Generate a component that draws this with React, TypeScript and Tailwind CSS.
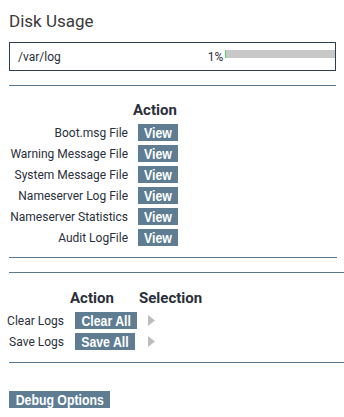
import { useState } from 'react';

const files = [
  'Boot.msg File',
  'Warning Message File',
  'System Message File',
  'Nameserver Log File',
  'Nameserver Statistics',
  'Audit LogFile',
];

function Btn({ children, w }: { children: React.ReactNode; w: string }) {
  return (
    <button
      className={`flex h-[17px] items-center justify-center bg-[#5e7d93] text-[15px] leading-[17px] font-bold text-white font-['Liberation_Sans',Arial,sans-serif] ${w}`}
    >
      <span className="inline-block whitespace-nowrap scale-x-[0.82]">{children}</span>
    </button>
  );
}

function Arrow() {
  return (
    <svg width="7" height="11" viewBox="0 0 7 11" className="block">
      <path d="M0 0 L7 5.5 L0 11 Z" fill="#bdbdbd" />
    </svg>
  );
}

export default function App() {
  const [usage] = useState(1);

  return (
    <div className="w-[344px] h-[417px] bg-white text-[#2a2f3a] font-['Roboto',sans-serif] overflow-hidden">
      <div className="pl-[9px] pt-[11px] text-[17px] leading-[20px] text-[#3a3a3a]">Disk Usage</div>

      <div className="mx-[9px] mt-[11px] h-[29px] w-[327px] border border-[#2c3e50] flex items-center pl-[8px]">
        <span className="text-[12px] leading-[16px] w-[186px]">/var/log</span>
        <span className="text-[12px] leading-[16px] w-[20px] text-right">{usage}%</span>
        <div className="ml-[2px] h-[8px] w-[110px] bg-[#c8c8c8] mt-[-6px]">
          <div className="h-full bg-[#4cd964]" style={{ width: `${Math.max(1, usage)}px` }} />
        </div>
      </div>

      <hr className="mx-[9px] mt-[14px] w-[327px] border-t border-[#5a7890]" />

      <div className="pl-[133px] mt-[15px] text-[15px] leading-[19px] font-bold">Action</div>
      <div className="mt-[4px] flex flex-col gap-[4px]">
        {files.map((f) => (
          <div key={f} className="flex items-center h-[17px]">
            <span className="w-[128px] text-right text-[12px] leading-[16px] whitespace-nowrap">{f}</span>
            <div className="ml-[10px]">
              <Btn w="w-[40px]">View</Btn>
            </div>
          </div>
        ))}
      </div>

      <hr className="mx-[9px] mt-[11px] w-[328px] border-t border-[#5a7890]" />
      <hr className="ml-[9px] mt-[14px] w-[335px] border-t border-[#5a7890]" />

      <div className="flex mt-[16px] text-[15px] leading-[19px] font-bold">
        <span className="pl-[70px] w-[139px]">Action</span>
        <span>Selection</span>
      </div>
      <div className="mt-[4px] flex flex-col gap-[4px]">
        {[
          ['Clear Logs', 'Clear All', 'w-[62px]'],
          ['Save Logs', 'Save All', 'w-[60px]'],
        ].map(([l, b, w]) => (
          <div key={l} className="flex items-center h-[17px]">
            <span className="w-[64px] text-right text-[12px] leading-[16px] whitespace-nowrap">{l}</span>
            <div className="w-[84px] pl-[11px]">
              <Btn w={w}>{b}</Btn>
            </div>
            <Arrow />
          </div>
        ))}
      </div>

      <hr className="ml-[9px] mt-[12px] w-[335px] border-t border-[#5a7890]" />

      <div className="pl-[9px] mt-[28px]">
        <Btn w="w-[101px]">Debug Options</Btn>
      </div>
    </div>
  );
}
